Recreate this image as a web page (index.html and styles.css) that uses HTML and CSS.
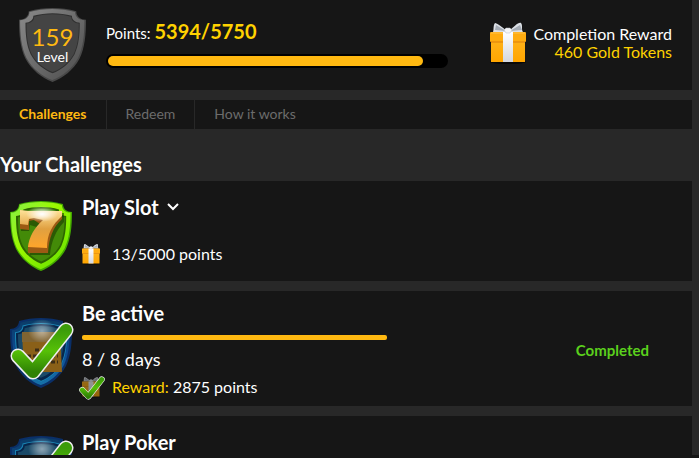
FILE: index.html
```html
<!DOCTYPE html>
<html lang="en">

<head>
  <meta charset="UTF-8">
  <meta name="viewport" content="width=device-width, initial-scale=1.0">
  <title>Challenges</title>
  <link rel="stylesheet" href="styles.css">
</head>

<body>
  <!-- shared icons -->
  <svg class="defs" aria-hidden="true">
    <defs>
      <linearGradient id="g-grey" x1="0" y1="0" x2="1" y2="1">
        <stop offset="0" stop-color="#8a8a8a"/><stop offset=".5" stop-color="#6c6c6c"/><stop offset="1" stop-color="#4c4c4c"/>
      </linearGradient>
      <linearGradient id="g-lime" x1="0" y1="0" x2="1" y2="1">
        <stop offset="0" stop-color="#86f04a"/><stop offset=".4" stop-color="#9cf800"/><stop offset="1" stop-color="#62e000"/>
      </linearGradient>
      <linearGradient id="g-seven" x1="0" y1="0" x2="0" y2="1">
        <stop offset="0" stop-color="#ffe39a"/><stop offset=".5" stop-color="#e0a040"/><stop offset="1" stop-color="#ffa52a"/>
      </linearGradient>
      <linearGradient id="g-blue" x1="0" y1="0" x2="0" y2="1">
        <stop offset="0" stop-color="#0b3c66"/><stop offset=".5" stop-color="#0d4a92"/><stop offset="1" stop-color="#1672a8"/>
      </linearGradient>
      <linearGradient id="g-tick" x1="0" y1="0" x2="0" y2="1">
        <stop offset="0" stop-color="#3c9c0a"/><stop offset=".5" stop-color="#56c007"/><stop offset="1" stop-color="#2f8205"/>
      </linearGradient>
      <linearGradient id="g-box" x1="0" y1="0" x2="0" y2="1">
        <stop offset="0" stop-color="#ffb31a"/><stop offset="1" stop-color="#ffa500"/>
      </linearGradient>
      <linearGradient id="g-ribbon" x1="0" y1="0" x2="0" y2="1">
        <stop offset="0" stop-color="#fff"/><stop offset="1" stop-color="#d3d7df"/>
      </linearGradient>
      <radialGradient id="g-glow">
        <stop offset="0" stop-color="#fff"/><stop offset=".35" stop-color="#fff" stop-opacity=".7"/><stop offset="1" stop-color="#fff" stop-opacity="0"/>
      </radialGradient>
      <path id="shield" d="M9 3C23-1 39-1 53 3C53 8 57 11 62 11C62 25 61 37 56 48C50 59 41 66 31 70C21 66 12 59 6 48C1 37 0 25 0 11C5 11 9 8 9 3Z"/>
    </defs>

    <symbol id="gift" viewBox="0 0 36 42">
      <ellipse cx="18" cy="40" rx="18" ry="2" fill="#080808"/>
      <path d="M17 9C12 5 7 1 5 1C3 3 4 8 3 10L16 10ZM19 9C24 5 28 0 31 1C33 3 31 8 33 10L20 10Z" fill="#dce0e6"/>
      <path d="M6 3L16 9L5 8ZM30 3L20 9L32 8Z" fill="#a5acb6"/>
      <rect x="1" y="17" width="34" height="23" fill="url(#g-box)"/>
      <rect x="0" y="10" width="36" height="10" rx="1" fill="#ffac10"/>
      <path d="M1 20H35" stroke="#dc7e0c"/>
      <path d="M1 11H35" stroke="#ffc24a"/>
      <rect x="13" y="10" width="10" height="30" fill="url(#g-ribbon)"/>
      <path d="M14 8L16 6H20L22 8L20 11H16Z" fill="#f4f5f7" stroke="#b5bac2" stroke-width=".5"/>
    </symbol>

    <symbol id="tick" viewBox="0 0 64 58">
      <path d="M8 34L23 50L56 8" fill="none" stroke="#eee" stroke-width="15" stroke-linecap="round" stroke-linejoin="round"/>
      <path d="M8 34L23 50L56 8" fill="none" stroke="url(#g-tick)" stroke-width="12" stroke-linecap="round" stroke-linejoin="round"/>
    </symbol>

    <symbol id="blue-shield" viewBox="0 0 62 70">
      <use href="#shield" fill="#0a2f68"/>
      <use href="#shield" fill="url(#g-blue)" transform="translate(2 2) scale(.93)"/>
      <use href="#shield" fill="#1a86b4" transform="translate(5 5) scale(.84)"/>
      <use href="#shield" fill="#07264c" transform="translate(6 6) scale(.81)"/>
      <use href="#shield" fill="#1a4a68" transform="translate(8 8) scale(.74)"/>
    </symbol>
  </svg>

  <div class="page">
    <header class="summary">
      <div class="level">
        <svg class="level-shield" viewBox="0 0 62 70" preserveAspectRatio="none" aria-hidden="true">
          <use href="#shield" fill="#484848"/>
          <use href="#shield" fill="url(#g-grey)" transform="translate(1 1) scale(.96)"/>
          <use href="#shield" fill="#303030" transform="translate(6 5) scale(.81)"/>
          <use href="#shield" fill="#444" transform="translate(7 6) scale(.78)"/>
        </svg>
        <div class="level-text">
          <strong>159</strong>
          <span>Level</span>
        </div>
      </div>
      <div class="points">
        <p>Points: <b>5394/5750</b></p>
        <div class="points-bar" role="progressbar" aria-label="Points" aria-valuenow="5394" aria-valuemin="0" aria-valuemax="5750">
          <div class="points-fill" style="width: 93.3%"></div>
        </div>
      </div>
      <div class="completion">
        <svg class="gift-big" aria-hidden="true"><use href="#gift"/></svg>
        <p>Completion Reward<br><span class="gold">460 Gold Tokens</span></p>
      </div>
    </header>

    <nav class="tabs">
      <a class="active" href="#challenges">Challenges</a>
      <a href="#redeem">Redeem</a>
      <a href="#how">How it works</a>
    </nav>

    <main id="challenges">
      <h1>Your Challenges</h1>

      <section class="card">
        <svg class="badge" viewBox="0 0 62 70" aria-hidden="true">
          <use href="#shield" fill="#43a800"/>
          <use href="#shield" fill="url(#g-lime)" transform="translate(1 1) scale(.96)"/>
          <use href="#shield" fill="#2d6500" transform="translate(6 6) scale(.81)"/>
          <use href="#shield" fill="#438a08" transform="translate(8 8) scale(.75)"/>
          <path d="M12 12L54 12L54 21C46 29 41 41 40 54L20 54C19 43 25 35 33 28L20 24L19 30L11 30Z" fill="#1d3a02" opacity=".6"/>
          <path d="M10 9L19 11L52 10L52 18C43 26 39 37 38 52L18 52C17 42 22 32 30 23L24 19L19 20L19 29L10 28Z" fill="#9c5a14"/>
          <path d="M10 9L19 10L52 10L52 15C42 24 37 33 37 47L18 46C19 36 24 27 33 19L24 17L19 18L18 24L10 23Z" fill="url(#g-seven)"/>
          <ellipse cx="32" cy="13" rx="16" ry="8" fill="url(#g-glow)"/>
        </svg>
        <div class="card-body">
          <h2>
            <button class="toggle" type="button">Play Slot
              <svg viewBox="0 0 12 8" aria-hidden="true"><path d="M1 1L6 6L11 1"/></svg>
            </button>
          </h2>
          <p class="reward slot-reward">
            <svg class="gift-small" aria-hidden="true"><use href="#gift"/></svg>
            <span>13/5000 points</span>
          </p>
        </div>
      </section>

      <section class="card done">
        <div class="badge">
          <svg viewBox="0 0 62 70" aria-hidden="true">
            <use href="#blue-shield" width="62" height="70"/>
            <path d="M12 14L50 14L52 54L14 54Z" fill="#8a6018"/>
            <path d="M12 14H50V24H12Z" fill="#806432"/>
            <path d="M25 32H40M17 38H48M17 44H48" stroke="#3c2d16" stroke-width="3" stroke-dasharray="4 2"/>
            <ellipse cx="32" cy="13" rx="14" ry="12" fill="url(#g-glow)" opacity=".5"/>
          </svg>
          <svg class="badge-tick" aria-hidden="true"><use href="#tick"/></svg>
        </div>
        <div class="card-body">
          <h2>Be active</h2>
          <div class="days-bar" role="progressbar" aria-label="Days" aria-valuenow="8" aria-valuemin="0" aria-valuemax="8">
            <div class="days-fill" style="width: 100%"></div>
          </div>
          <p class="days">8 / 8 days</p>
          <p class="reward">
            <span class="gift-done">
              <svg class="gift-small" aria-hidden="true"><use href="#gift"/></svg>
              <svg class="gift-tick" aria-hidden="true"><use href="#tick"/></svg>
            </span>
            <span><span class="gold">Reward:</span> 2875 points</span>
          </p>
        </div>
        <p class="status">Completed</p>
      </section>

      <section class="card">
        <div class="badge">
          <svg viewBox="0 0 62 70" aria-hidden="true">
            <use href="#blue-shield" width="62" height="70"/>
            <ellipse cx="32" cy="13" rx="14" ry="12" fill="url(#g-glow)" opacity=".5"/>
          </svg>
          <svg class="badge-tick" aria-hidden="true"><use href="#tick"/></svg>
        </div>
        <div class="card-body">
          <h2>Play Poker</h2>
        </div>
      </section>
    </main>
  </div>
  <div class="bottom-edge"></div>
</body>

</html>
```

FILE: styles.css
```css
* {
  margin: 0;
  padding: 0;
  box-sizing: border-box;
}

body {
  height: 100vh;
  overflow: hidden;
  background-color: #282828;
  color: #fff;
  font-family: Lato, "Open Sans", sans-serif;
  font-size: 16px;
  line-height: 18px;
}

svg {
  display: block;
}

.defs {
  position: absolute;
  width: 0;
  height: 0;
}

.page {
  padding-right: 7px;
}

.gold {
  color: #ffd200;
}

/* summary */
.summary {
  display: flex;
  align-items: center;
  height: 90px;
  padding: 0 20px 0 19px;
  background-color: #161616;
}

.level {
  display: grid;
  flex: none;
  width: 67px;
  height: 74px;
  margin-right: 20px;
}

.level-shield,
.level-text {
  grid-area: 1 / 1;
}

.level-shield {
  width: 67px;
  height: 74px;
}

.level-text {
  z-index: 1;
  padding-top: 17px;
  text-align: center;
}

.level-text strong {
  display: block;
  color: #ffb911;
  font-size: 24px;
  font-weight: 400;
  line-height: 24px;
}

.level-text span {
  display: block;
  font-size: 14px;
  line-height: 16px;
}

.points {
  width: 342px;
  padding-bottom: 4px;
}

.points p {
  margin-bottom: 9px;
  font-size: 15px;
  line-height: 24px;
}

.points b {
  color: #ffd200;
  font-size: 20px;
}

.points-bar {
  height: 14px;
  padding: 2px;
  border-radius: 7px;
  background-color: #000;
}

.points-fill {
  height: 10px;
  border-radius: 5px;
  background-color: #ffb911;
}

.completion {
  display: flex;
  align-items: center;
  gap: 7px;
  margin-left: auto;
  padding-bottom: 4px;
  text-align: right;
  white-space: nowrap;
}

.gift-big {
  width: 36px;
  height: 42px;
}

/* tabs */
.tabs {
  display: flex;
  height: 29px;
  margin: 10px 0 23px;
  background-color: #161616;
}

.tabs a {
  padding: 0 19px;
  border-right: 1px solid #282828;
  color: #6c6c6c;
  font-size: 14px;
  line-height: 28px;
  text-decoration: none;
}

.tabs a:last-child {
  border-right: 0;
}

.tabs .active {
  color: #ffb911;
  font-weight: 700;
}

/* challenges */
h1,
h2 {
  font-size: 20px;
  line-height: 24px;
}

h1 {
  margin-bottom: 5px;
}

.card {
  display: flex;
  min-height: 100px;
  margin-bottom: 10px;
  padding: 14px 10px 7px;
  background-color: #161616;
}

.badge {
  flex: none;
  position: relative;
  width: 62px;
  height: 70px;
  margin: 6px 10px 0 0;
}

.done {
  padding-top: 10px;
}

.done .badge {
  margin-top: 17px;
}

.badge-tick {
  position: absolute;
  top: 4px;
  left: 0;
  width: 64px;
  height: 58px;
}

.card-body {
  flex: 1;
}

.toggle {
  display: flex;
  align-items: center;
  gap: 8px;
  border: 0;
  background: none;
  color: inherit;
  font: inherit;
  cursor: pointer;
}

.toggle svg {
  width: 12px;
  height: 8px;
  fill: none;
  stroke: #fff;
  stroke-width: 2;
}

.days-bar {
  width: 305px;
  max-width: 100%;
  height: 5px;
  margin: 10px 0 9px;
}

.days-fill {
  height: 5px;
  border-radius: 2px;
  background-color: #ffb911;
}

.days {
  margin-bottom: 6px;
  font-size: 18px;
  line-height: 20px;
}

.reward {
  display: flex;
  align-items: center;
  gap: 12px;
  line-height: 24px;
}

.slot-reward {
  margin-top: 23px;
}

.gift-small {
  width: 18px;
  height: 24px;
}

.gift-done {
  position: relative;
}

.gift-done .gift-small {
  opacity: .55;
}

.gift-tick {
  position: absolute;
  top: 1px;
  left: -3px;
  width: 26px;
  height: 24px;
}

.status {
  align-self: center;
  margin-right: 33px;
  color: #5bd01d;
  font-size: 15px;
  font-weight: 700;
}

.bottom-edge {
  position: fixed;
  right: 0;
  bottom: 0;
  left: 0;
  height: 3px;
  background-color: #161616;
}
```
